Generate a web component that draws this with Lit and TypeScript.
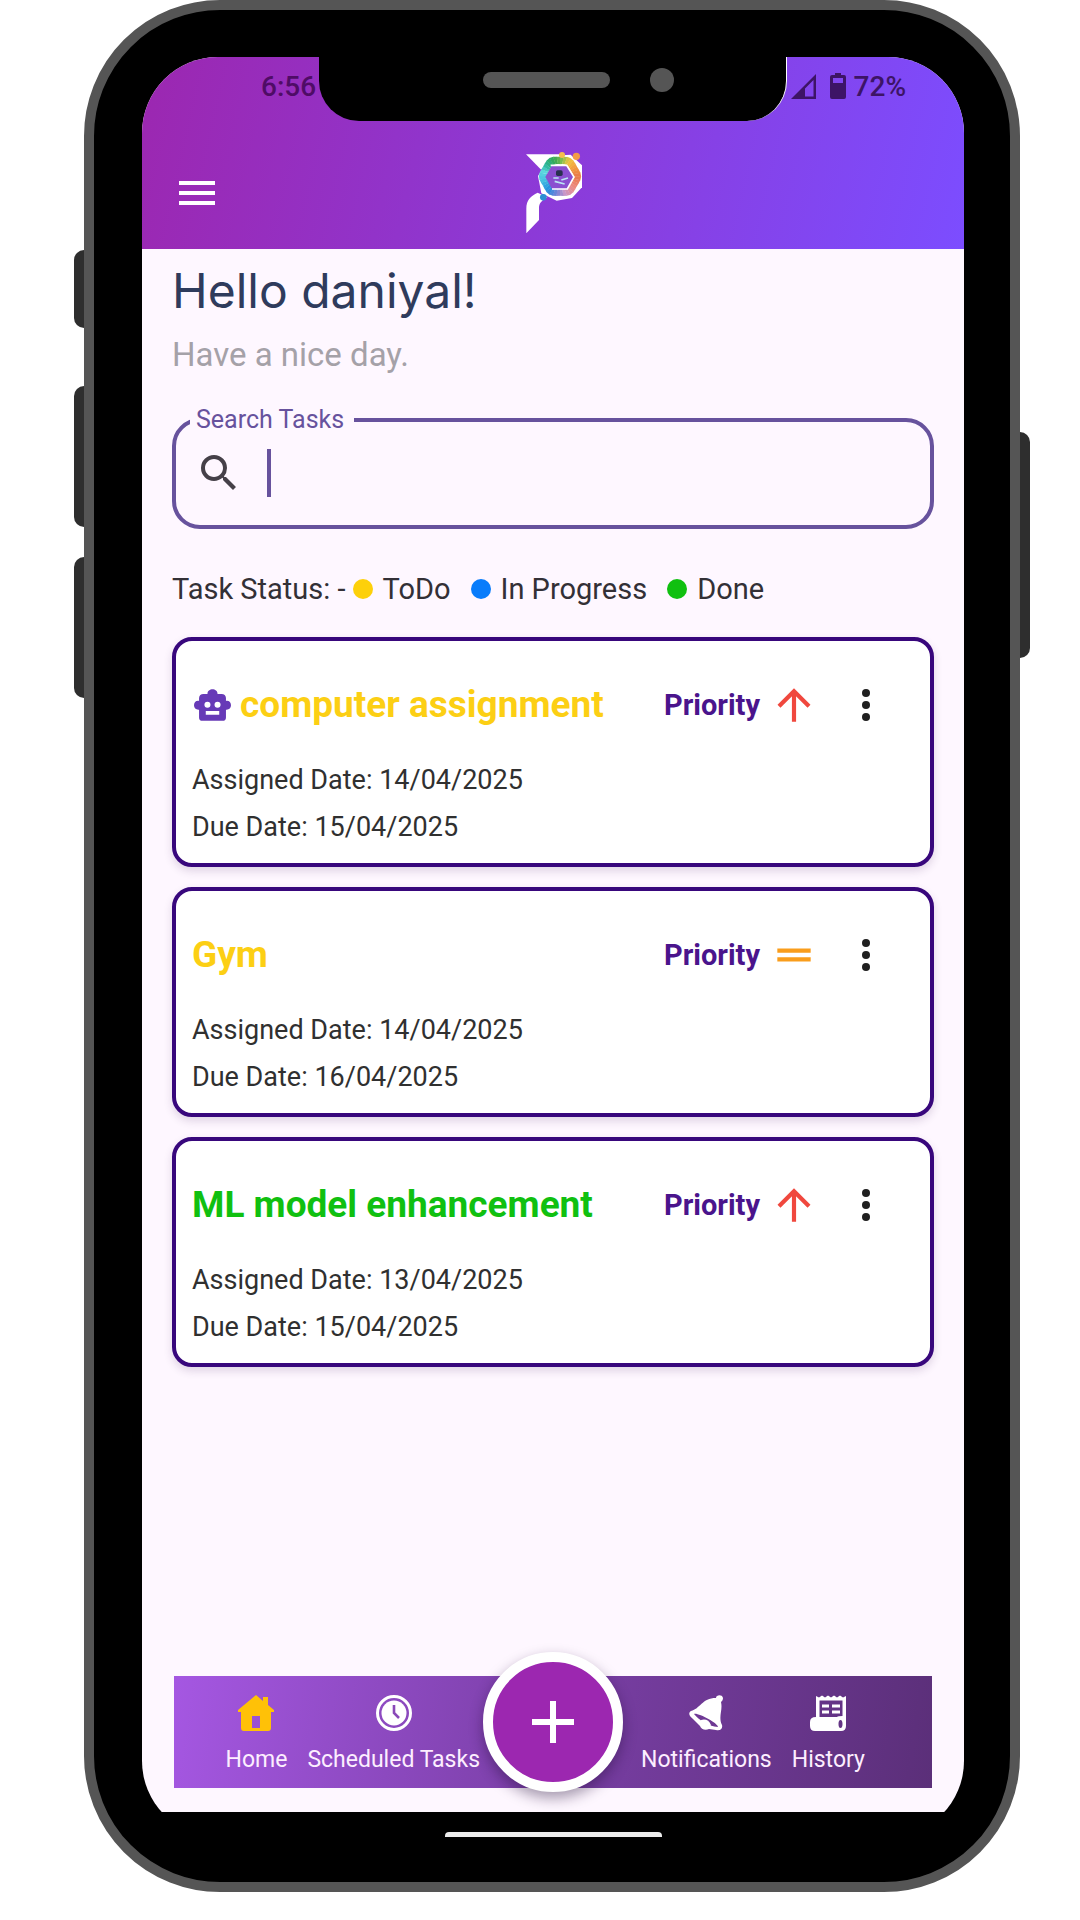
import { LitElement, html, svg, css } from "lit";
import { customElement, property } from "lit/decorators.js";

type Status = "todo" | "progress" | "done";
type Priority = "high" | "medium";

interface Task {
  title: string;
  status: Status;
  priority: Priority;
  assigned: string;
  due: string;
  ai?: boolean;
}

const TASKS: Task[] = [
  { title: "computer assignment", status: "todo", priority: "high", assigned: "14/04/2025", due: "15/04/2025", ai: true },
  { title: "Gym", status: "todo", priority: "medium", assigned: "14/04/2025", due: "16/04/2025" },
  { title: "ML model enhancement", status: "done", priority: "high", assigned: "13/04/2025", due: "15/04/2025" },
];

const RING: [number, number, number, number][] = [
  [0, 232, 120, 72],
  [40, 236, 140, 132],
  [75, 200, 150, 200],
  [100, 120, 130, 215],
  [130, 36, 140, 222],
  [165, 70, 190, 225],
  [195, 90, 214, 222],
  [220, 40, 180, 150],
  [250, 52, 168, 84],
  [275, 120, 190, 80],
  [300, 240, 196, 64],
  [330, 242, 156, 64],
  [360, 232, 120, 72],
];

/* Colour of the logo ring at an angle, blended between neighbouring stops. */
function ringColor(angle: number): string {
  const i = RING.findIndex((s, n) => n > 0 && angle <= s[0]);
  const a = RING[i - 1];
  const b = RING[i];
  const t = (angle - a[0]) / (b[0] - a[0]);
  const mix = [1, 2, 3].map((k) => Math.round(a[k] + (b[k] - a[k]) * t));
  return `rgb(${mix.join(",")})`;
}

/* Point on a softened hexagon at an angle. */
function hex(angle: number, r: number): [number, number] {
  const rad = (angle * Math.PI) / 180;
  const k = r * (1 + 0.04 * Math.cos(6 * rad));
  return [180 + k * Math.cos(rad), 109 + k * Math.sin(rad)];
}

function ringSegments() {
  const parts = [];
  for (let a = 0; a < 360; a += 10) {
    const [x1, y1] = hex(a, 61);
    const [x2, y2] = hex(a + 11, 61);
    const [x3, y3] = hex(a + 11, 38);
    const [x4, y4] = hex(a, 38);
    parts.push(svg`<path d="M${x1} ${y1}L${x2} ${y2}L${x3} ${y3}L${x4} ${y4}Z" fill=${ringColor(a + 5)} />`);
  }
  return parts;
}

const logo = html`
  <svg class="logo" viewBox="-6 9 330 300" role="img" aria-label="App logo">
    <path d="M78 43H190L180 90L122 88Z" fill="#fff" />
    <path d="M113 158C92 168 79 180 79 206V280L117 240V206C117 190 124 182 142 172Z" fill="#fff" />
    <path d="M150 48L212 44L246 76V142L216 174L170 182L124 160L114 108Z" fill="#fff" />
    ${ringSegments()}
    <path d="M156 76H200L222 111L202 147H156L136 111Z" fill="#8a4fd0" />
    <path d="M152 76H200L222 111L202 147H156" fill="none" stroke="#fff" stroke-width="5" />
    <rect x="168" y="91" width="20" height="17" rx="5" fill="#27304f" />
    <path d="M160 114H176M184 120L204 114M164 124L194 132" stroke="#b9e4f4" stroke-width="5" fill="none" />
    <circle cx="186" cy="45" r="9" fill="#f5bd4c" />
    <circle cx="229" cy="49" r="11" fill="#f29b45" />
    <circle cx="130" cy="172" r="10" fill="#2c8fd2" />
  </svg>
`;

const icons = {
  menu: html`<svg viewBox="0 0 24 24" aria-hidden="true"><path d="M3 6h18v2H3zm0 5h18v2H3zm0 5h18v2H3z" /></svg>`,
  search: html`<svg viewBox="0 0 24 24" aria-hidden="true"><path d="M15.5 14h-.79l-.28-.27A6.47 6.47 0 0 0 16 9.5 6.5 6.5 0 1 0 9.5 16c1.61 0 3.09-.59 4.23-1.57l.27.28v.79l5 4.99L20.49 19l-4.99-5zm-6 0C7.01 14 5 11.99 5 9.5S7.01 5 9.5 5 14 7.01 14 9.5 11.99 14 9.5 14z" /></svg>`,
  robot: html`<svg viewBox="0 0 110 94" aria-hidden="true"><path fill-rule="evenodd" d="M40 14C40 -4 70 -4 70 14H82Q94 14 95 26V35C104 33 110 40 110 48S104 62 95 61V84Q95 94 85 94H25Q15 94 15 84V61C6 62 0 56 0 48S6 33 15 35V26Q16 14 28 14ZM40 37A9 9 0 1 0 40 55A9 9 0 1 0 40 37ZM70 37A9 9 0 1 0 70 55A9 9 0 1 0 70 37ZM35 65V76H75V65Z" /></svg>`,
  high: html`<svg viewBox="0 0 24 24" role="img" aria-label="High"><path d="M12 22V4M3 12.700L12 3.700L21 12.700" fill="none" stroke="currentColor" stroke-width="2.500" /></svg>`,
  medium: html`<svg viewBox="0 0 24 24" role="img" aria-label="Medium"><path d="M2 9.400h20M2 14.600h20" fill="none" stroke="currentColor" stroke-width="2.600" /></svg>`,
  more: html`<svg viewBox="0 0 24 24" aria-hidden="true"><circle cx="12" cy="6" r="2" /><circle cx="12" cy="12" r="2" /><circle cx="12" cy="18" r="2" /></svg>`,
  home: html`<svg viewBox="0 0 36 36" aria-hidden="true"><path fill-rule="evenodd" d="M18 0L25 6V2H30V10L36 15V17H33V33Q33 36 30 36H6Q3 36 3 33V17H0V15ZM14 21V33H22V21Z" /></svg>`,
  clock: html`<svg viewBox="0 0 36 36" aria-hidden="true"><circle cx="18" cy="18" r="16.500" fill="none" stroke="currentColor" stroke-width="3" /><circle cx="18" cy="18" r="12.500" /><path d="M18 10V18L23 23" fill="none" stroke="#8a49b8" stroke-width="2.600" /></svg>`,
  bell: html`<svg viewBox="0 0 36 36" aria-hidden="true"><path fill-rule="evenodd" d="M28 3C28 0 34 -1 35 3C35 5 34 6 33 7C35 15 30 22 34 30C35 34 32 36 28 35L21 34C17 36 13 34 12 31L5 24C1 21 0 18 3 16C12 14 14 3 28 3ZM6 19C11 25 20 31 30 32C30 28 9 17 6 19Z" /><path d="M13 25Q20 23 23 30Q21 34 17 33Q13 31 13 25Z" /></svg>`,
  history: html`<svg viewBox="0 0 36 36" aria-hidden="true"><path fill-rule="evenodd" d="M6 1L9 2.500L12 .5L15 2.500L18 .5L21 2.500L24 .5L27 2.500L30 .5L33 2.500L36 1V31Q36 36 31 36H5Q0 36 0 31V27Q0 22 6 22ZM9.500 5.500V22H27Q28 21 32.500 21V5.500ZM30.500 25C29 25 28.500 27 28.500 29S29 33 30.500 33S32.500 31 32.500 29S32 25 30.500 25Z" /><path d="M12 9.500H19V12.500H12ZM22 9.500H30V12.500H22ZM12 15.500H19V18.500H12ZM22 15.500H30V18.500H22Z" /></svg>`,
  plus: html`<svg viewBox="0 0 42 42" aria-hidden="true"><path d="M18 0h6v18h18v6H24v18h-6V24H0v-6h18z" /></svg>`,
  signal: html`<svg viewBox="0 0 25 25" aria-hidden="true"><path fill-rule="evenodd" d="M0 25L25 0V25ZM14 14.500V22.500H22.500V6Z" /></svg>`,
  battery: html`<svg viewBox="0 0 16 26" aria-hidden="true"><path fill-rule="evenodd" d="M5 0H11V2H14Q16 2 16 4V24Q16 26 14 26H2Q0 26 0 24V4Q0 2 2 2H5ZM3 5V10H13V5Z" /></svg>`,
};

@customElement("task-card")
export class TaskCard extends LitElement {
  @property({ attribute: false }) task!: Task;

  static styles = css`
    :host {
      display: block;
    }
    .card {
      box-sizing: border-box;
      min-height: 230px;
      padding: 32px 16px 12px;
      border: 4px solid #38077c;
      border-radius: 20px;
      background: #fff;
      box-shadow: 0 4px 8px rgba(60, 30, 90, 0.16);
    }
    .top {
      display: flex;
      align-items: center;
      height: 64px;
      margin-bottom: 20px;
    }
    .title {
      flex: 1;
      display: flex;
      align-items: center;
      gap: 9px;
      margin: 0;
      font-size: 37px;
      line-height: 40px;
      font-weight: 700;
    }
    .todo {
      color: #fccf14;
    }
    .progress {
      color: #087cfb;
    }
    .done {
      color: #10c010;
    }
    .robot {
      padding-left: 2px;
      color: #673ab7;
    }
    svg {
      display: block;
      width: 40px;
      height: 40px;
      fill: currentColor;
    }
    .robot svg {
      width: 37px;
      height: 32px;
    }
    .priority {
      font-size: 29px;
      line-height: 40px;
      font-weight: 700;
      color: #4a148c;
    }
    .level {
      margin-left: 14px;
    }
    .high {
      color: #f0483e;
    }
    .medium {
      color: #f99d1c;
    }
    .more {
      display: grid;
      place-items: center;
      width: 64px;
      height: 64px;
      margin: 0 16px 0 20px;
      padding: 0;
      border: 0;
      background: none;
      color: #1f1f1f;
    }
    .more svg {
      width: 48px;
      height: 48px;
    }
    .date {
      margin: 0;
      font-size: 27px;
      line-height: 47px;
      color: #303030;
    }
  `;

  render() {
    const t = this.task;
    return html`
      <article class="card">
        <div class="top">
          <h2 class="title ${t.status}">
            ${t.ai ? html`<span class="robot">${icons.robot}</span>` : ""}
            <span>${t.title}</span>
          </h2>
          <span class="priority">Priority</span>
          <span class="level ${t.priority}">${icons[t.priority]}</span>
          <button class="more" type="button" aria-label="More options">${icons.more}</button>
        </div>
        <p class="date">Assigned Date: ${t.assigned}</p>
        <p class="date">Due Date: ${t.due}</p>
      </article>
    `;
  }
}

@customElement("app-root")
export class AppRoot extends LitElement {
  static styles = css`
    :host {
      display: block;
      min-height: 100vh;
      background: #fff;
      font-family: Roboto, "Liberation Sans", sans-serif;
    }
    svg {
      display: block;
      fill: currentColor;
    }
    button {
      padding: 0;
      border: 0;
      background: none;
      font: inherit;
      color: inherit;
    }
    .stage {
      box-sizing: border-box;
      display: grid;
      grid-template-columns: 10px 1fr 10px;
      min-height: 100vh;
      padding: 0 50px 28px 74px;
    }
    .keys {
      display: flex;
      flex-direction: column;
    }
    .left {
      padding-top: 250px;
    }
    .right {
      padding-top: 432px;
    }
    .key {
      height: 141px;
      margin-bottom: 30px;
      background: #2e2e2e;
    }
    .left .key {
      border-radius: 10px 0 0 10px;
    }
    .right .key {
      height: 226px;
      border-radius: 0 10px 10px 0;
    }
    .left .small {
      height: 78px;
      margin-bottom: 58px;
    }
    .phone {
      display: flex;
      padding: 47px 46px 45px 48px;
      border: 10px solid #555;
      border-radius: 136px;
      background: #000;
    }
    .screen {
      position: relative;
      flex: 1;
      display: flex;
      flex-direction: column;
      overflow: hidden;
      border-radius: 76px;
      background: linear-gradient(#fef7ff, #fef7ff) top / 100% calc(100% - 25px) no-repeat #000;
    }
    .notch {
      position: absolute;
      top: -1px;
      left: 21.5%;
      right: 21.5%;
      display: flex;
      justify-content: center;
      align-items: flex-start;
      height: 65px;
      border-right: 1px solid #fff;
      border-radius: 0 0 40px 40px;
      background: #000;
    }
    .speaker {
      width: 127px;
      height: 16px;
      margin: 16px 40px 0 52px;
      border-radius: 8px;
      background: #555;
    }
    .camera {
      width: 24px;
      height: 24px;
      margin-top: 12px;
      border-radius: 50%;
      background: #555;
    }
    .header {
      background: linear-gradient(103deg, #9c27b0, #7c4dff);
    }
    .status {
      box-sizing: border-box;
      display: flex;
      align-items: center;
      justify-content: space-between;
      height: 60px;
      padding: 0 58px 2px 119px;
      color: #3d1466;
      font-size: 28px;
      font-weight: 500;
    }
    .time {
      color: #4f0c66;
    }
    .indicators {
      display: flex;
      align-items: center;
      gap: 8px;
    }
    .signal svg {
      width: 25px;
      height: 25px;
      margin-right: 6px;
    }
    .battery svg {
      width: 16px;
      height: 26px;
    }
    .appbar {
      display: grid;
      grid-template-columns: 1fr auto 1fr;
      align-items: center;
      height: 132px;
      padding: 20px 31px 0;
      box-sizing: border-box;
      color: #fff;
    }
    .menu svg {
      width: 48px;
      height: 48px;
    }
    .logo {
      width: 110px;
      height: 100px;
    }
    .main {
      flex: 1;
      padding: 18px 30px 0;
    }
    .hello {
      margin: 0;
      font-family: Inter, sans-serif;
      font-size: 48px;
      line-height: 48px;
      font-weight: 400;
      color: #2f3b5c;
    }
    .sub {
      margin: 18px 0 28px;
      font-size: 33px;
      line-height: 44px;
      color: #a5a1a8;
    }
    .field {
      box-sizing: border-box;
      height: 124px;
      margin: 0;
      padding: 0 24px;
      border: 4px solid #67529d;
      border-radius: 28px;
      min-width: 0;
    }
    .legend {
      margin-left: -10px;
      padding: 0 10px 0 6px;
      font-size: 25px;
      line-height: 30px;
      color: #67529d;
    }
    .row {
      display: flex;
      align-items: center;
      height: 76px;
      color: #454048;
    }
    .row svg {
      width: 48px;
      height: 48px;
      margin-left: -5px;
    }
    .caret {
      width: 4px;
      height: 48px;
      margin-left: 24px;
      background: #67529d;
    }
    .input {
      flex: 1;
      min-width: 0;
      height: 48px;
      padding: 0;
      border: 0;
      outline: 0;
      background: none;
      font: inherit;
      font-size: 28px;
      color: #222;
    }
    .states {
      display: flex;
      align-items: center;
      margin: 42px 0 30px;
      font-size: 29px;
      line-height: 36px;
      color: #333036;
    }
    .state {
      display: flex;
      align-items: center;
      gap: 10px;
      margin-right: 19px;
    }
    .dot {
      width: 20px;
      height: 20px;
      margin-left: 1px;
      border-radius: 50%;
    }
    .caption {
      margin-right: 6px;
    }
    .yellow {
      background: #fdd00a;
    }
    .blue {
      background: #087cfb;
    }
    .green {
      background: #10c010;
    }
    .list {
      display: flex;
      flex-direction: column;
      gap: 20px;
    }
    .nav {
      display: grid;
      grid-template-columns: 1fr 140px 1fr;
      align-items: center;
      height: 112px;
      margin: 0 32px 24px;
      background: linear-gradient(98deg, #a557e2, #7a3fa6 50%, #5b2f79);
      color: #fdeeff;
    }
    .group {
      display: flex;
      gap: 20px;
    }
    .before {
      justify-content: flex-end;
      padding-right: 3px;
    }
    .after {
      padding-left: 18px;
    }
    .item {
      display: flex;
      flex-direction: column;
      align-items: center;
      gap: 15px;
      padding-top: 4px;
      font-size: 23px;
      line-height: 28px;
      color: inherit;
      text-decoration: none;
      white-space: nowrap;
    }
    .item svg {
      width: 36px;
      height: 36px;
      color: #fff;
    }
    .current svg {
      color: #ffc107;
    }
    .fab {
      box-sizing: border-box;
      display: grid;
      place-items: center;
      width: 140px;
      height: 140px;
      margin: -34px 0 -14px;
      border: 10px solid #fff;
      border-radius: 50%;
      background: #9c27b0;
      color: #fff;
      box-shadow: 0 6px 14px rgba(30, 10, 50, 0.4);
    }
    .fab svg {
      width: 42px;
      height: 42px;
    }
    .gesture {
      display: flex;
      justify-content: center;
      align-items: flex-end;
      height: 25px;
      background: #000;
    }
    .handle {
      width: 217px;
      height: 5px;
      border-radius: 4px 4px 0 0;
      background: #ececec;
    }
  `;

  render() {
    return html`
      <div class="stage">
        <div class="keys left">
          <div class="key small"></div>
          <div class="key"></div>
          <div class="key"></div>
        </div>
        <div class="phone">
          <div class="screen">
            <header class="header">
              <div class="status">
                <span class="time">6:56</span>
                <span class="indicators">
                  <span class="signal">${icons.signal}</span>
                  <span class="battery">${icons.battery}</span>
                  <span>72%</span>
                </span>
              </div>
              <div class="appbar">
                <button class="menu" type="button" aria-label="Menu">${icons.menu}</button>
                ${logo}
              </div>
            </header>
            <main class="main">
              <h1 class="hello">Hello daniyal!</h1>
              <p class="sub">Have a nice day.</p>
              <fieldset class="field">
                <legend class="legend"><label for="search">Search Tasks</label></legend>
                <div class="row">
                  ${icons.search}
                  <span class="caret"></span>
                  <input class="input" id="search" type="text" />
                </div>
              </fieldset>
              <div class="states">
                <span class="caption">Task Status: -</span>
                <span class="state"><span class="dot yellow"></span>ToDo</span>
                <span class="state"><span class="dot blue"></span>In Progress</span>
                <span class="state"><span class="dot green"></span>Done</span>
              </div>
              <div class="list">${TASKS.map((t) => html`<task-card .task=${t}></task-card>`)}</div>
            </main>
            <nav class="nav" aria-label="Main">
              <div class="group before">
                <a class="item current" href="#home">${icons.home}<span>Home</span></a>
                <a class="item" href="#scheduled">${icons.clock}<span>Scheduled Tasks</span></a>
              </div>
              <button class="fab" type="button" aria-label="Add task">${icons.plus}</button>
              <div class="group after">
                <a class="item" href="#notifications">${icons.bell}<span>Notifications</span></a>
                <a class="item" href="#history">${icons.history}<span>History</span></a>
              </div>
            </nav>
            <div class="gesture"><div class="handle"></div></div>
            <div class="notch">
              <div class="speaker"></div>
              <div class="camera"></div>
            </div>
          </div>
        </div>
        <div class="keys right"><div class="key"></div></div>
      </div>
    `;
  }
}
